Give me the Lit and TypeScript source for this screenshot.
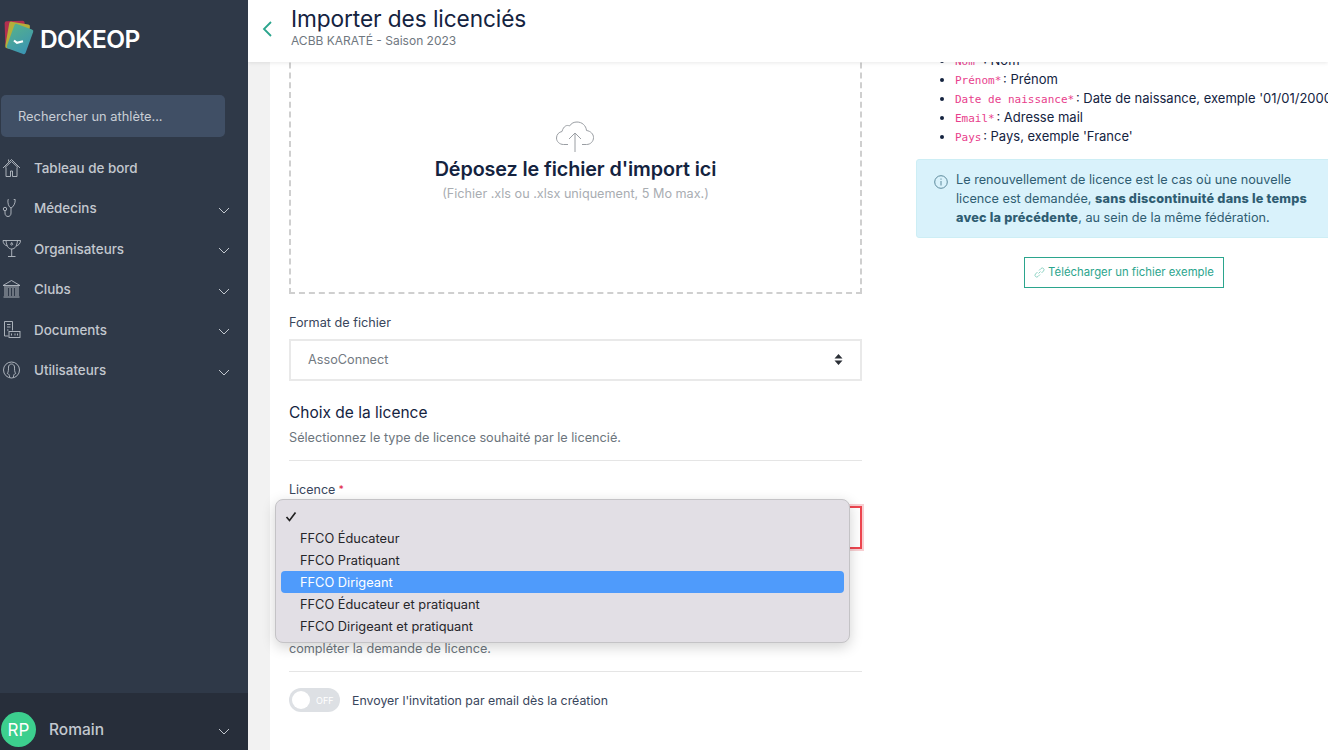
import { LitElement, html, css, svg } from "lit";
import { customElement } from "lit/decorators.js";

const chev = html`<svg class="chev" width="12" height="7" viewBox="0 0 12 7"><path d="M1 1l5 5 5-5" fill="none" stroke="currentColor" stroke-width="1"/></svg>`;

const icons = {
  home: svg`<path d="M1 10 9.500 1.500 18 10M3 9.500 9.500 3.500 16 9.500M4 9.500v9h4.500v-5.500h2v5.500H15V9.500M6.500 3.500V1.500"/>`,
  med: svg`<path d="M6.500 1.500H6C5.500 5 6.500 9 9 10c2.500-1 4.500-5 4.200-8.500h-1.500M9 10v5c0 2.300-1.300 3.500-3 3.500S3 17.200 3 15v-2"/><circle cx="3" cy="11" r="1.700"/>`,
  cup: svg`<path d="M1 1.500h17.500M1 1.500c0 3 2 5 4.500 5.500M18.500 1.500c0 3-2 5-4.500 5.500M4 1.500c.5 5 2 8.500 5.700 8.500S15 6.500 15.500 1.500M9.700 10v7M6 17.500h7.500"/><path d="M9.700 3.500l1 2-1 .6-1-.6z"/>`,
  bank: svg`<path d="M1 6.500 9.500 1.500 18 6.500zM2 8h15M3 9v8M5 9v8M8 9v8M11 9v8M14 9v8M16 9v8M1.500 18h16"/>`,
  doc: svg`<path d="M2.500 1.500h8v9M2.500 1.500v14.500h4M5 4.500h3.500M5 7h3.500M5 10h1.500"/><rect x="7" y="11.500" width="11" height="6"/><path d="M9.500 13.500v2M13 13.500v2M15.500 13.500v2"/>`,
  user: svg`<circle cx="9.500" cy="10" r="8"/><path d="M7.500 17c0-2-.5-3-2.200-3.500C6.500 12 6.500 9.500 6.500 7c0-1.500 1.300-3 3-3s3 1.500 3 3c0 2.500 0 5 1.200 6.500-1.700.5-2.200 1.500-2.200 3.500"/>`,
};

const nav = [
  ["Tableau de bord", icons.home, false],
  ["Médecins", icons.med, true],
  ["Organisateurs", icons.cup, true],
  ["Clubs", icons.bank, true],
  ["Documents", icons.doc, true],
  ["Utilisateurs", icons.user, true],
] as const;

const fields = [
  ["Nom*", "Nom"],
  ["Prénom*", "Prénom"],
  ["Date de naissance*", "Date de naissance, exemple '01/01/2000'"],
  ["Email*", "Adresse mail"],
  ["Pays", "Pays, exemple 'France'"],
];

const options = ["FFCO Éducateur", "FFCO Pratiquant", "FFCO Dirigeant", "FFCO Éducateur et pratiquant", "FFCO Dirigeant et pratiquant"];

@customElement("app-root")
export class AppRoot extends LitElement {
  static styles = css`
    :host { display: flex; width: 1328px; height: 750px; overflow: hidden; font-family: Inter, "Liberation Sans", sans-serif; color: #14233f; background: #fff; }
    * { box-sizing: border-box; }
    .side { width: 248px; flex: none; background: #2f3948; display: flex; flex-direction: column; color: #c3c8cf; }
    .brand { display: flex; align-items: center; height: 76px; padding-left: 4px; gap: 5px; color: #fff; font-size: 24.500px; font-weight: 600; letter-spacing: -0.6px; }
    .brand span { padding-top: 2px; }
    .search { margin: 19px 23px 0 1px; height: 42px; background: #404f65; border-radius: 5px; padding-left: 17px; display: flex; align-items: center; font-size: 12.850px; color: #c9ced5; }
    .nav { margin-top: 10.500px; }
    .nav-item { height: 40.500px; display: flex; align-items: center; padding: 0 18px 0 2px; font-size: 13.400px; font-weight: 500; }
    .nav-item svg.ic { width: 19px; height: 20px; margin-right: 13px; fill: none; stroke: #b9bec6; stroke-width: .9; flex: none; }
    .chev { margin-left: auto; color: #c3c8cf; flex: none; position: relative; top: 2px; }
    .foot { margin-top: auto; height: 57px; background: #272e3a; display: flex; align-items: center; padding: 16px 18px 0 1px; font-size: 15.500px; font-weight: 500; }
    .avatar { width: 35px; height: 35px; border-radius: 50%; background: #3ccf8e; color: #fff; display: flex; align-items: center; justify-content: center; font-size: 17px; font-weight: 400; margin-right: 13px; }
    .main { flex: 1; position: relative; overflow: hidden; min-width: 0; }
    .top { position: absolute; inset: 0 0 auto 0; height: 62px; background: #fff; box-shadow: 0 1px 4px rgba(0,0,0,.09); z-index: 2; display: flex; align-items: center; padding: 0 0 0 14px; }
    .back { margin-right: 19px; margin-bottom: 4px; }
    .top h1 { margin: 0; font-size: 22.700px; font-weight: 400; line-height: 26px; color: #14233f; letter-spacing: -0.1px; }
    .top p { margin: 1px 0 9px; font-size: 12px; line-height: 15px; color: #6f7780; }
    .page { display: flex; height: 100%; }
    .gutter { width: 22px; flex: none; background: #f2f2f2; }
    .left { width: 573px; margin-left: 19px; flex: none; padding-top: 43px; position: relative; }
    .drop { height: 251px; border: 2px dashed #cfcfcf; padding-top: 76px; display: flex; flex-direction: column; align-items: center; }
    .drop svg { margin-right: 2px; }
    .drop h2 { margin: 4px 0 0; font-size: 19.750px; line-height: 24px; font-weight: 600; color: #14233f; letter-spacing: -0.1px; }
    .drop p { margin: 5px 0 0; font-size: 12.650px; line-height: 16px; color: #a9adb2; }
    label { display: block; font-size: 12.700px; line-height: 16px; color: #39465c; }
    .fmt { margin-top: 21px; }
    .select { margin-top: 8px; height: 42px; border: 2px solid #e9e9e9; display: flex; align-items: center; justify-content: space-between; padding: 0 17px 1px; font-size: 12.700px; color: #737a82; }
    h3 { margin: 22px 0 0; font-size: 15.500px; line-height: 20px; font-weight: 400; color: #14233f; }
    .muted { margin: 7px 0 0; font-size: 12.700px; line-height: 16px; color: #6c757d; }
    hr { border: 0; border-top: 1px solid #e5e5e5; margin: 14px 0 0; }
    .lic { margin-top: 20px; font-size: 12.500px; }
    .lic i { color: #e0163c; font-style: normal; font-size: 10px; vertical-align: 1px; }
    .invalid { margin-top: 8px; height: 43px; border: 2px solid #ee4650; box-shadow: 0 0 0 2px #f8cfd2; }
    .hidden-note { margin: 92px 0 0; font-size: 12.650px; line-height: 16px; color: #6c757d; }
    .hr2 { margin-top: 14px; }
    .toggle-row { display: flex; align-items: center; gap: 12px; margin-top: 16px; font-size: 12.350px; color: #39465c; }
    .toggle { width: 51px; height: 24px; border-radius: 12px; background: #dde0e4; display: flex; align-items: center; padding-left: 3px; gap: 6px; color: #fff; font-size: 9px; }
    .knob { width: 18px; height: 18px; border-radius: 50%; background: #fff; }
    .menu { position: absolute; left: -14px; top: 499px; width: 575px; height: 144px; background: #e2dfe5; border: 1px solid #c4c3c6; border-radius: 8px; box-shadow: 0 4px 14px rgba(0,0,0,.18); padding: 5px 5px; font-size: 12.800px; color: #26262a; z-index: 1; }
    .opt { height: 22px; padding-left: 19px; border-radius: 4px; display: flex; align-items: center; }
    .opt.on { background: #4f9bfb; color: #fff; }
    .check { margin-left: -15px; }
    .right { flex: none; width: 470px; margin-left: 54px; padding-top: 51px; font-size: 13px; }
    ul { margin: 0; padding: 0 0 0 39px; }
    li { white-space: nowrap; height: 19px; line-height: 19px; }
    code { font-family: "DejaVu Sans Mono", monospace; font-size: 11px; line-height: 1; color: #e83e8c; margin-right: -2px; }
    .alert { margin-top: 13px; height: 79px; background: #d9f2fb; border: 1px solid #cdeef5; border-radius: 3px; display: flex; padding: 10px 17px; gap: 8px; color: #2f5d72; line-height: 19px; width: 430px; font-size: 12.700px; }
    .alert svg { flex: none; margin-top: 5px; }
    .alert b { font-weight: 800; letter-spacing: .2px; }
    .alert div { width: 372px; }
    .btn-row { width: 416px; display: flex; justify-content: center; margin-top: 19px; }
    .btn { width: 200px; height: 31px; border: 1px solid #2ba58d; color: #2ba58d; display: flex; align-items: center; justify-content: center; gap: 3px; padding-bottom: 1px; font-size: 11.350px; }
  `;

  render() {
    return html`
      <aside class="side">
        <div class="brand">
          <svg width="31" height="36" viewBox="0 0 31 36">
            <defs><linearGradient id="lg" x1="0" y1="0" x2="1" y2="1"><stop offset="0" stop-color="#55b08c"/><stop offset="1" stop-color="#3a94b4"/></linearGradient></defs>
            <rect x="1" y="1" width="20" height="25" rx="2" fill="#b3304f" transform="rotate(-2 11 14)"/>
            <rect x="3" y="3" width="21" height="27" rx="2" fill="#b5ae3a" transform="rotate(10 14 17)"/>
            <rect x="6" y="6" width="20" height="26" rx="2" fill="url(#lg)" transform="rotate(20 16 19)"/>
            <path d="M10 20.500l3 2.300 6-1.500" fill="none" stroke="#fff" stroke-width="2.200"/>
          </svg>
          <span>DOKEOP</span>
        </div>
        <div class="search">Rechercher un athlète...</div>
        <nav class="nav">
          ${nav.map(([t, ic, c]) => html`<div class="nav-item"><svg class="ic" viewBox="0 0 19 20">${ic}</svg>${t}${c ? chev : ""}</div>`)}
        </nav>
        <div class="foot"><div class="avatar">RP</div>Romain${chev}</div>
      </aside>
      <main class="main">
        <header class="top">
          <svg class="back" width="10" height="16" viewBox="0 0 10 16"><path d="M9 1 2 8l7 7" fill="none" stroke="#2ba58d" stroke-width="1.800"/></svg>
          <div><h1>Importer des licenciés</h1><p>ACBB KARATÉ - Saison 2023</p></div>
        </header>
        <div class="page">
          <div class="gutter"></div>
          <section class="left">
            <div class="drop">
              <svg width="40" height="32" viewBox="0 0 40 32" fill="none" stroke="#9a9ea3" stroke-width="1">
                <path d="M13 23.500H8.500C4.500 23.500 1.500 20.500 1.500 17c0-3.500 2.500-6 5.500-6.500C8.500 5 12 3.500 14.500 5 16.500 2 19 1 22 1c5 0 9 3.500 9.500 8.500 4 .5 7 3.500 7 7 0 4-3 7-7 7H27"/>
                <path d="M20 31V13M14 18l6-6 6 6"/>
              </svg>
              <h2>Déposez le fichier d'import ici</h2>
              <p>(Fichier .xls ou .xlsx uniquement, 5 Mo max.)</p>
            </div>
            <label class="fmt">Format de fichier</label>
            <div class="select">AssoConnect
              <svg width="9" height="11" viewBox="0 0 9 11"><path d="M4.500 0 8.500 4.500H.5zM4.500 11 .5 6.500h8z" fill="#2b2f36"/></svg>
            </div>
            <h3>Choix de la licence</h3>
            <p class="muted">Sélectionnez le type de licence souhaité par le licencié.</p>
            <hr />
            <label class="lic">Licence <i>*</i></label>
            <div class="select invalid"></div>
            <p class="hidden-note">compléter la demande de licence.</p>
            <hr class="hr2" />
            <div class="toggle-row"><div class="toggle"><span class="knob"></span>OFF</div>Envoyer l'invitation par email dès la création</div>
            <div class="menu">
              <div class="opt"><svg class="check" width="12" height="11" viewBox="0 0 12 11"><path d="M1.500 6l3 3.500 6-8" fill="none" stroke="#222" stroke-width="1.700"/></svg></div>
              ${options.map((o) => html`<div class="opt ${o === "FFCO Dirigeant" ? "on" : ""}">${o}</div>`)}
            </div>
          </section>
          <section class="right">
            <ul>${fields.map(([c, t]) => html`<li><code>${c}</code> : ${t}</li>`)}</ul>
            <div class="alert">
              <svg width="14" height="14" viewBox="0 0 14 14" fill="none" stroke="#5d8a9c"><circle cx="7" cy="7" r="6.300"/><path d="M7 6v4.500M7 3.500v1.200"/></svg>
              <div>Le renouvellement de licence est le cas où une nouvelle licence est demandée, <b>sans discontinuité dans le temps avec la précédente</b>, au sein de la même fédération.</div>
            </div>
            <div class="btn-row"><div class="btn">
              <svg width="11" height="11" viewBox="0 0 11 11" fill="none" stroke="#8fd3c4"><path d="M4.500 6.500 6.500 4.500M3.500 5 1.500 7a1.700 1.700 0 0 0 2.500 2.500l2-2M5 3.500l2-2A1.700 1.700 0 0 1 9.500 4l-2 2"/></svg>
              Télécharger un fichier exemple</div></div>
          </section>
        </div>
      </main>
    `;
  }
}
